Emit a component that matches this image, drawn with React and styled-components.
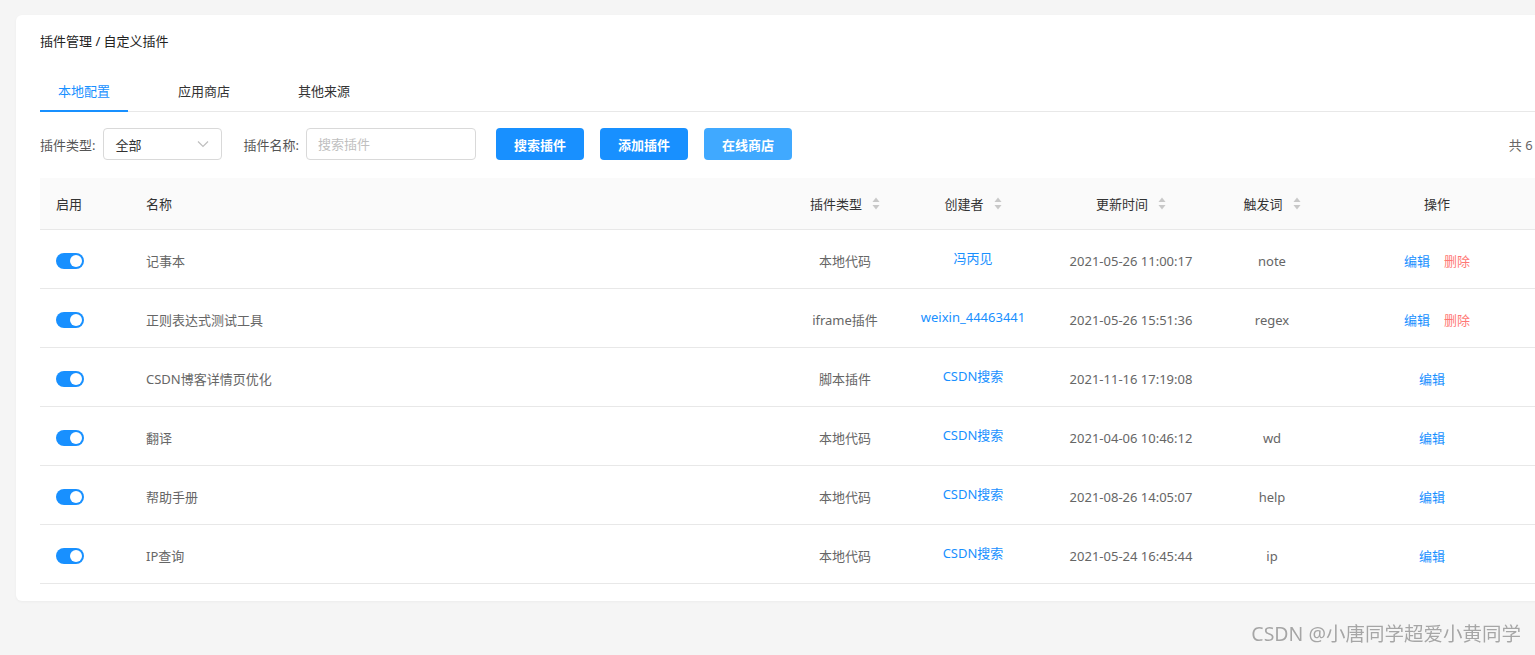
import React from "react";
import styled, { createGlobalStyle } from "styled-components";

const GlobalStyle = createGlobalStyle`
  html, body {
    margin: 0;
    padding: 0;
    background: #f5f5f5;
    overflow: hidden;
    font-family: "Noto Sans", "Noto Sans CJK SC", sans-serif;
    font-size: 13px;
    color: #333;
  }
`;

const plugins = [
  { name: "记事本", type: "本地代码", creator: "冯丙见", time: "2021-05-26 11:00:17", word: "note", del: true },
  { name: "正则表达式测试工具", type: "iframe插件", creator: "weixin_44463441", time: "2021-05-26 15:51:36", word: "regex", del: true },
  { name: "CSDN博客详情页优化", type: "脚本插件", creator: "CSDN搜索", time: "2021-11-16 17:19:08", word: "" },
  { name: "翻译", type: "本地代码", creator: "CSDN搜索", time: "2021-04-06 10:46:12", word: "wd" },
  { name: "帮助手册", type: "本地代码", creator: "CSDN搜索", time: "2021-08-26 14:05:07", word: "help" },
  { name: "IP查询", type: "本地代码", creator: "CSDN搜索", time: "2021-05-24 16:45:44", word: "ip" },
];

const columns = "90px 650px 130px 126px 190px 92px 238px";

function Dashboard() {
  return (
    <>
      <GlobalStyle />
      <Page>
        <Card>
          <Breadcrumb>插件管理 / 自定义插件</Breadcrumb>
          <Tabs>
            <Tab active>本地配置</Tab>
            <Tab>应用商店</Tab>
            <Tab>其他来源</Tab>
          </Tabs>
          <Filters>
            <Label>插件类型:</Label>
            <Select>
              <span>全部</span>
              <svg width="12" height="8" viewBox="0 0 12 8">
                <path d="M1 1.5 L6 6.5 L11 1.5" fill="none" stroke="#bfbfbf" strokeWidth="1.2" />
              </svg>
            </Select>
            <Label gap>插件名称:</Label>
            <Input placeholder="搜索插件" />
            <Button>搜索插件</Button>
            <Button>添加插件</Button>
            <Button light>在线商店</Button>
            <Total>共 6 条</Total>
          </Filters>
          <Table>
            <HeadRow>
              <Cell left>启用</Cell>
              <Cell left>名称</Cell>
              <Cell>插件类型<Sorter /></Cell>
              <Cell>创建者<Sorter /></Cell>
              <Cell>更新时间<Sorter /></Cell>
              <Cell>触发词<Sorter /></Cell>
              <Cell>操作</Cell>
            </HeadRow>
            {plugins.map((item, k) => (
              <Row key={k}>
                <Cell left><Toggle /></Cell>
                <Cell left muted>{item.name}</Cell>
                <Cell muted>{item.type}</Cell>
                <Cell><Creator>{item.creator}</Creator></Cell>
                <Cell muted>{item.time}</Cell>
                <Cell muted>{item.word}</Cell>
                <Cell>
                  <Action>编辑</Action>
                  {item.del ? <Action danger>删除</Action> : null}
                </Cell>
              </Row>
            ))}
          </Table>
        </Card>
        <Watermark>CSDN @小唐同学超爱小黄同学</Watermark>
      </Page>
    </>
  );
}

function Sorter() {
  return (
    <SortIcon width="8" height="13" viewBox="0 0 8 13">
      <path d="M4 0.5 L7.5 5 L0.5 5 Z" fill="#c8c8c8" />
      <path d="M4 12.5 L7.5 8 L0.5 8 Z" fill="#c8c8c8" />
    </SortIcon>
  );
}

const Page = styled.div`
  width: 100vw;
  height: 100vh;
  padding: 15px 0 0 16px;
  box-sizing: border-box;
`;

const Card = styled.div`
  width: 1564px;
  background: #fff;
  border-radius: 6px;
  padding: 16px 24px 17px 24px;
  box-sizing: border-box;
  box-shadow: 0 1px 3px rgba(0, 0, 0, 0.04);
`;

const Breadcrumb = styled.div`
  line-height: 20px;
  color: #222;
`;

const Tabs = styled.div`
  display: flex;
  gap: 32px;
  margin-top: 20px;
  border-bottom: 1px solid #e8e8e8;
`;

const Tab = styled.div`
  width: 88px;
  height: 41px;
  line-height: 41px;
  text-align: center;
  box-sizing: border-box;
  color: ${(p) => (p.active ? "#1890ff" : "#333")};
  border-bottom: 2px solid ${(p) => (p.active ? "#1890ff" : "transparent")};
  margin-bottom: -1px;
`;

const Filters = styled.div`
  display: flex;
  align-items: center;
  height: 32px;
  margin-top: 16px;
`;

const Label = styled.span`
  color: #555;
  margin-right: ${(p) => (p.gap ? "7px" : "8px")};
  margin-left: ${(p) => (p.gap ? "21px" : "0")};
`;

const Select = styled.div`
  width: 119px;
  height: 32px;
  box-sizing: border-box;
  border: 1px solid #d9d9d9;
  border-radius: 4px;
  display: flex;
  align-items: center;
  justify-content: space-between;
  padding: 0 12px 0 11px;
  color: #333;
`;

const Input = styled.input`
  width: 170px;
  height: 32px;
  box-sizing: border-box;
  border: 1px solid #d9d9d9;
  border-radius: 4px;
  padding: 0 11px;
  font: inherit;
  outline: none;
  margin-right: 20px;
  &::placeholder {
    color: #bfbfbf;
  }
`;

const Button = styled.button`
  width: 88px;
  height: 32px;
  border: none;
  border-radius: 4px;
  background: ${(p) => (p.light ? "#40a9ff" : "#1890ff")};
  color: #fff;
  font: inherit;
  font-weight: 600;
  margin-right: 16px;
  padding: 0;
`;

const Total = styled.span`
  margin-left: auto;
  margin-right: 7px;
  color: #666;
`;

const Table = styled.div`
  margin-top: 18px;
`;

const HeadRow = styled.div`
  display: grid;
  grid-template-columns: ${columns};
  height: 52px;
  background: #fafafa;
  border-bottom: 1px solid #e8e8e8;
  box-sizing: border-box;
  color: #333;
`;

const Row = styled.div`
  display: grid;
  grid-template-columns: ${columns};
  height: 59px;
  padding-top: 3px;
  border-bottom: 1px solid #e8e8e8;
  box-sizing: border-box;
`;

const Cell = styled.div`
  display: flex;
  align-items: center;
  justify-content: ${(p) => (p.left ? "flex-start" : "center")};
  padding-left: ${(p) => (p.left ? "16px" : "0")};
  color: ${(p) => (p.muted ? "#666" : "inherit")};
  white-space: nowrap;
`;

const SortIcon = styled.svg`
  margin-left: 10px;
`;

const Toggle = styled.span`
  width: 28px;
  height: 16px;
  border-radius: 8px;
  background: #1890ff;
  position: relative;
  display: inline-block;
  &::after {
    content: "";
    position: absolute;
    right: 2px;
    top: 2px;
    width: 12px;
    height: 12px;
    border-radius: 50%;
    background: #fff;
  }
`;

const Creator = styled.span`
  color: #1890ff;
  padding-bottom: 6px;
`;

const Action = styled.span`
  color: ${(p) => (p.danger ? "#ff7875" : "#1890ff")};
  margin-right: ${(p) => (p.danger ? "0" : "10px")};
  margin-left: ${(p) => (p.danger ? "4px" : "0")};
`;

const Watermark = styled.div`
  position: fixed;
  right: 14px;
  bottom: 8px;
  font-size: 19.5px;
  color: #a6a6a6;
  text-shadow: 0 0 1px #fff;
`;

export default Dashboard;
